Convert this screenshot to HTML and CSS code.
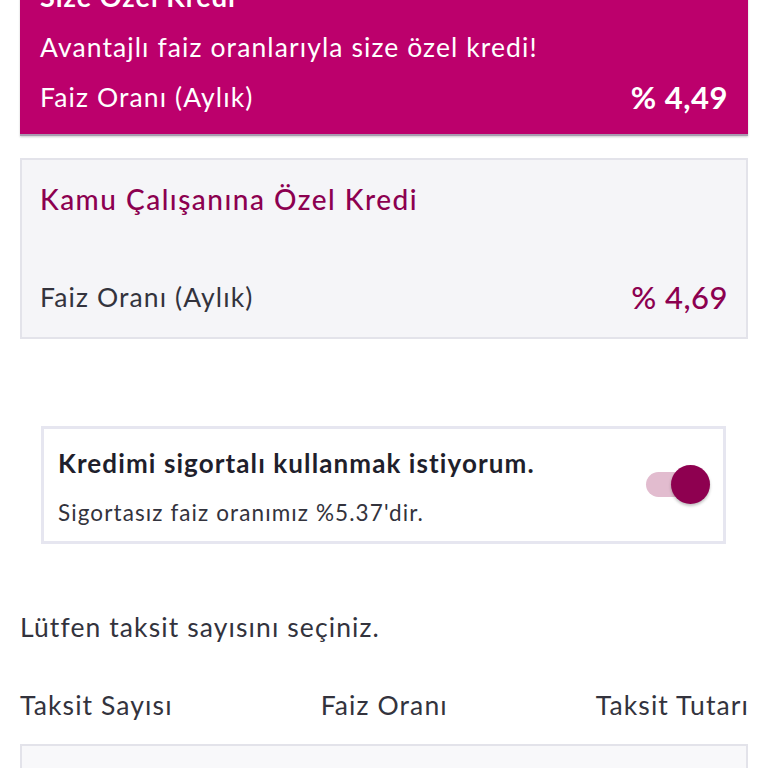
FILE: index.html
```html
<!DOCTYPE html>
<html lang="tr">
<head>
<meta charset="utf-8">
<link rel="stylesheet" href="styles.css">
</head>
<body>
<main class="page">
  <section class="card card-active">
    <div class="card-title">Size Özel Kredi</div>
    <div class="card-sub">Avantajlı faiz oranlarıyla size özel kredi!</div>
    <div class="rate-row">
      <span class="rate-label">Faiz Oranı (Aylık)</span>
      <span class="rate-value">% 4,49</span>
    </div>
  </section>

  <section class="card card-plain">
    <div class="card-title">Kamu Çalışanına Özel Kredi</div>
    <div class="spacer"></div>
    <div class="rate-row">
      <span class="rate-label">Faiz Oranı (Aylık)</span>
      <span class="rate-value">% 4,69</span>
    </div>
  </section>

  <section class="insurance">
    <div class="ins-text">
      <div class="ins-title">Kredimi sigortalı kullanmak istiyorum.</div>
      <div class="ins-sub">Sigortasız faiz oranımız %5.37'dir.</div>
    </div>
    <div class="toggle"><span class="track"></span><span class="knob"></span></div>
  </section>

  <p class="prompt">Lütfen taksit sayısını seçiniz.</p>

  <div class="table-head">
    <span>Taksit Sayısı</span>
    <span>Faiz Oranı</span>
    <span class="last">Taksit Tutarı</span>
  </div>

  <div class="table-box"></div>
</main>
</body>
</html>
```

FILE: styles.css
```css
* { box-sizing: border-box; }
html, body { margin: 0; padding: 0; background: #fff; }
body {
  font-family: "Lato", "Open Sans", sans-serif;
  color: #2d2d38;
  width: 768px;
  height: 768px;
  overflow: hidden;
}
.page {
  margin-top: -40px;
  display: flex;
  flex-direction: column;
}
.card {
  margin: 0 20px;
  padding: 12px 20px 12px 20px;
}
.card-active {
  background: #bc006c;
  color: #fff;
  border-bottom: 2px solid #a89cb0;
  box-shadow: 0 1px 2px rgba(0,0,0,0.2);
}
.card-active .card-title {
  font-size: 27px;
  font-weight: 700;
  line-height: 50px;
  letter-spacing: 1px;
}
.card-sub {
  font-size: 26.5px;
  line-height: 50px;
  letter-spacing: 1.1px;
}
.rate-row {
  display: flex;
  justify-content: space-between;
  align-items: center;
  line-height: 50px;
}
.rate-label { font-size: 26.5px; letter-spacing: 1.1px; }
.rate-value { font-size: 31px; font-weight: 700; letter-spacing: 0.5px; }

.card-plain {
  margin-top: 22px;
  background: #f5f5f8;
  border: 2px solid #e3e3ea;
  padding: 19px 18px 20px 18px;
}
.card-plain .card-title {
  color: #8c0050;
  font-size: 28px;
  font-weight: 500;
  line-height: 40px;
  letter-spacing: 1.5px;
}
.card-plain .spacer { height: 58px; }
.card-plain .rate-row { line-height: 40px; }
.card-plain .rate-label { color: #33333d; }
.card-plain .rate-value { color: #8c0050; font-weight: 500; }

.insurance {
  margin: 87px 42px 0 41px;
  border: 3px solid #e6e6f0;
  background: #fff;
  padding: 17px 13px 13px 14px;
  display: flex;
  align-items: center;
  justify-content: space-between;
}
.ins-title {
  font-size: 26px;
  font-weight: 700;
  color: #1f1f2c;
  line-height: 34px;
  letter-spacing: 1.1px;
}
.ins-sub {
  margin-top: 18px;
  font-size: 22.5px;
  color: #33333d;
  line-height: 30px;
  letter-spacing: 1.1px;
}
.toggle {
  position: relative;
  width: 64px;
  height: 39px;
  margin-top: -6px;
}
.track {
  position: absolute;
  left: 0;
  top: 7px;
  width: 46px;
  height: 25px;
  border-radius: 13px;
  background: #e2bccf;
}
.knob {
  position: absolute;
  right: 0;
  top: 0;
  width: 39px;
  height: 39px;
  border-radius: 50%;
  background: #8e0050;
  box-shadow: 0 2px 3px rgba(0,0,0,0.25);
}

.prompt {
  margin: 66px 20px 0 20px;
  font-size: 26.5px;
  line-height: 34px;
  color: #33333d;
  letter-spacing: 1.1px;
}
.table-head {
  margin: 44px 20px 0 20px;
  display: flex;
  justify-content: space-between;
  font-size: 26.5px;
  line-height: 34px;
  color: #33333d;
  letter-spacing: 1.1px;
}
.table-head .last { margin-right: -1px; }
.table-box {
  margin: 22px 20px 0 20px;
  height: 80px;
  border: 2px solid #e3e3ea;
  background: #f8f8fa;
}
```
